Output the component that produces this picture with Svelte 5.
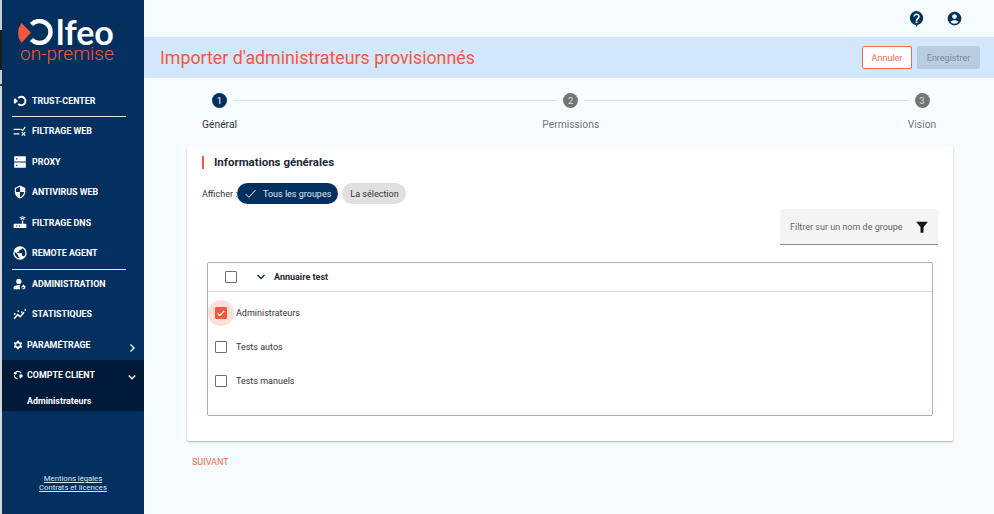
<script>
  const steps = [
    { n: 1, label: 'Général', active: true },
    { n: 2, label: 'Permissions' },
    { n: 3, label: 'Vision' }
  ];
  const groups = [
    { name: 'Administrateurs', checked: true },
    { name: 'Tests autos' },
    { name: 'Tests manuels' }
  ];
  const paths = {
    server: 'M2 2h20v9H2zM2 13h20v9H2zM5 5.500v2h2.500v-2zM5 16.500v2h2.500v-2z',
    shield: 'M12 1 3 5v6c0 5.500 3.800 10.700 9 12 5.200-1.300 9-6.500 9-12V5zm0 11h7c-.5 4.100-3.300 7.800-7 8.900V12H5V6.300l7-3.100z',
    router: 'M3 14h18a1 1 0 0 1 1 1v5a1 1 0 0 1-1 1H3a1 1 0 0 1-1-1v-5a1 1 0 0 1 1-1zm3 3v1.500h2V17zm4 0v1.500h2V17zm5 -8h2v5h-2zM12.500 6.500a6 6 0 0 1 7 0l-1 1.300a4.500 4.500 0 0 0-5 0zM11 4.500a8.500 8.500 0 0 1 10 0l-1 1.200a7 7 0 0 0-8 0z',
    globe: 'M12 2a10 10 0 1 0 0 20 10 10 0 0 0 0-20zm-1 17.900A8 8 0 0 1 4.200 10L9 15v1a2 2 0 0 0 2 2zm6.900-2.500A2 2 0 0 0 16 16h-1v-3a1 1 0 0 0-1-1H8v-2h2a1 1 0 0 0 1-1V7h2a2 2 0 0 0 2-2v-.4a8 8 0 0 1 2.900 12.800z',
    admin: 'M10 3a4.500 4.500 0 1 1 0 9 4.500 4.500 0 0 1 0-9zM1 21v-3c0-2.700 5-4.500 9-4.500 .8 0 1.500 0 2.200.2A7 7 0 0 0 12.500 21zM18 13a1 1 0 0 1 1 1v.6l1 .5.600-.3 1 1.700-.5.400v1.200l.5.400-1 1.700-.600-.3-1 .5v.6h-2v-.6l-1-.5-.600.3-1-1.700.5-.4v-1.200l-.5-.4 1-1.700.600.3 1-.5V14a1 1 0 0 1 1-1zm-1 3.500a1.500 1.500 0 1 0 0 3 1.500 1.500 0 0 0 0-3z',
    gear: 'M19.400 13a7.600 7.600 0 0 0 0-2l2.100-1.600-2-3.500-2.500 1a7.500 7.500 0 0 0-1.700-1L15 3.300h-4l-.4 2.600a7.500 7.500 0 0 0-1.700 1l-2.500-1-2 3.500L6.500 11a7.600 7.600 0 0 0 0 2l-2.100 1.600 2 3.500 2.500-1a7.500 7.500 0 0 0 1.700 1l.4 2.600h4l.4-2.600a7.500 7.500 0 0 0 1.700-1l2.500 1 2-3.500zM13 15.500a3.500 3.500 0 1 1 0-7 3.500 3.500 0 0 1 0 7z'
  };
</script>

<div class="page">
  <div class="sliver"></div>
  <aside class="side">
    <div class="logo">
      <div class="brand">
        <svg class="mark" viewBox="0 0 36 26" width="36" height="26" aria-hidden="true">
          <path d="M4.500 4 14 13.500 4.500 24Q-2.500 14 4.500 4z" fill="#f4583a" />
          <path d="M14.500 5.500A11 11 0 1 1 14.500 20.500" fill="none" stroke="#fff" stroke-width="4.400" />
        </svg>
        <span class="lfeo">lfeo</span>
      </div>
      <div class="onp">on-premise</div>
    </div>

    <nav>
      <a class="item"><svg viewBox="0 0 36 26" class="ic"><path d="M4.500 5 13 13 4.500 21Q-1 13 4.500 5z" fill="#fff"/><path d="M13.500 5.500A10.800 10.800 0 1 1 13.500 20.500" stroke="#fff" stroke-width="5" fill="none"/></svg><span>TRUST-CENTER</span></a>
      <div class="rule"></div>
      <a class="item"><svg viewBox="0 0 24 24" class="ic"><path d="M1 8h12v2.200H1zM1 16h10v2.200H1z" fill="#fff"/><path d="m14 9 2.500 2.500L21 5M15 14l6 6M21 14l-6 6" stroke="#fff" stroke-width="2" fill="none"/></svg><span>FILTRAGE WEB</span></a>
      <a class="item"><svg viewBox="0 0 24 24" class="ic"><path d={paths.server} fill="#fff" fill-rule="evenodd"/></svg><span>PROXY</span></a>
      <a class="item"><svg viewBox="1 0 22 24" class="ic"><path d={paths.shield} fill="#fff"/></svg><span>ANTIVIRUS WEB</span></a>
      <a class="item"><svg viewBox="1 2 22 22" class="ic"><path d={paths.router} fill="#fff" fill-rule="evenodd"/></svg><span>FILTRAGE DNS</span></a>
      <a class="item"><svg viewBox="1.500 1.500 21 21" class="ic"><path d={paths.globe} fill="#fff"/></svg><span>REMOTE AGENT</span></a>
      <div class="rule"></div>
      <a class="item"><svg viewBox="0 1 24 22" class="ic"><path d={paths.admin} fill="#fff" fill-rule="evenodd"/></svg><span>ADMINISTRATION</span></a>
      <a class="item"><svg viewBox="0 2 24 20" class="ic"><path d="m2 20 6-7 4.500 3.500L19 9" stroke="#fff" stroke-width="2.500" fill="none"/><circle cx="3" cy="12" r="1.600" fill="#fff"/><circle cx="9" cy="7" r="1.600" fill="#fff"/><circle cx="15" cy="9" r="1.600" fill="#fff"/><circle cx="21" cy="5" r="1.600" fill="#fff"/></svg><span>STATISTIQUES</span></a>
      <a class="item sub"><svg viewBox="3 2 20 20" class="ic small"><path d={paths.gear} fill="#fff" fill-rule="evenodd"/></svg><span>PARAMÉTRAGE</span>
        <svg viewBox="0 0 24 24" class="chev"><path d="m9 5 7 7-7 7" stroke="#fff" stroke-width="2.800" fill="none"/></svg></a>
      <div class="open">
        <a class="item sub"><svg viewBox="1 2 22 20" class="ic small"><path d="M8 5a8 8 0 0 1 11 3M20 13a8 8 0 0 1-4 6M11 20a8 8 0 0 1-7-8" stroke="#fff" stroke-width="2.500" fill="none"/><circle cx="6" cy="8" r="3" fill="#fff"/><path d="M15 11h7v6h-7z" fill="#fff"/></svg><span>COMPTE CLIENT</span>
          <svg viewBox="0 0 24 24" class="chev"><path d="m5.500 9 6.500 6.500L18.500 9" stroke="#fff" stroke-width="2.800" fill="none"/></svg></a>
        <a class="subitem">Administrateurs</a>
      </div>
    </nav>

    <div class="legal">
      <a>Mentions légales</a>
      <a>Contrats et licences</a>
    </div>
  </aside>

  <main>
    <header class="top">
      <svg viewBox="0 0 24 24" width="17" height="17"><path d="M12 1.500a9.800 9.800 0 0 0-1 19.500l1 2.500 2-2.700A9.800 9.800 0 0 0 12 1.500z" fill="#03305f"/><path d="M8.800 9.300a3.300 3.300 0 1 1 5.200 2.700c-1.300.9-2 1.400-2 3" stroke="#fff" stroke-width="2.200" fill="none"/><rect x="10.800" y="16.200" width="2.400" height="2.400" fill="#fff"/></svg>
      <svg viewBox="0 0 24 24" width="15" height="15"><path d="M12 1a11 11 0 1 0 0 22 11 11 0 0 0 0-22zm0 4a3.800 3.800 0 1 1 0 7.600A3.800 3.800 0 0 1 12 5zm0 15.500c-2.700 0-5-1.200-6.400-3.200 1-1.600 3.900-2.500 6.400-2.500s5.400.9 6.400 2.500c-1.400 2-3.700 3.200-6.400 3.200z" fill="#03305f"/></svg>
    </header>

    <section class="titlebar">
      <h1>Importer d'administrateurs provisionnés</h1>
      <div class="actions">
        <button class="cancel">Annuler</button>
        <button class="save">Enregistrer</button>
      </div>
    </section>

    <div class="content">
      <div class="stepper">
        {#each steps as s, i}
          <div class="step">
            <div class="bullet" class:on={s.active}>{s.n}</div>
            <div class="slabel" class:on={s.active}>{s.label}</div>
          </div>
          {#if i < 2}<div class="line"></div>{/if}
        {/each}
      </div>

      <div class="card">
        <h2>Informations générales</h2>
        <div class="show">
          <span class="afficher">Afficher :</span>
          <span class="chip on"><svg viewBox="0 0 24 24" width="13" height="13"><path d="m3 13 6 6L21 6" stroke="#fff" stroke-width="1.700" fill="none"/></svg>Tous les groupes</span>
          <span class="chip">La sélection</span>
        </div>
        <div class="filter-row">
          <div class="filter">
            <span>Filtrer sur un nom de groupe</span>
            <svg viewBox="0 0 24 24" width="14" height="14"><path d="M2 3h20l-7.500 9.500V22h-5v-9.500z" fill="#111"/></svg>
          </div>
        </div>
        <div class="tree">
          <div class="tree-head">
            <span class="box"></span>
            <svg viewBox="0 0 24 24" width="12" height="12"><path d="m5 8 7 7 7-7" stroke="#03305f" stroke-width="3" fill="none"/></svg>
            <strong>Annuaire test</strong>
          </div>
          <div class="tree-body">
            {#each groups as g}
              <div class="row">
                <span class="halo" class:lit={g.checked}>
                  <span class="box" class:checked={g.checked}>
                    {#if g.checked}<svg viewBox="0 0 24 24" width="10" height="10"><path d="m4 13 5 5L20 7" stroke="#fff" stroke-width="3" fill="none"/></svg>{/if}
                  </span>
                </span>
                <span class="gname">{g.name}</span>
              </div>
            {/each}
          </div>
        </div>
      </div>

      <div class="next">SUIVANT</div>
    </div>
  </main>
</div>

<style>
  :global(body) { margin: 0; background: #f6fbff; font-family: Roboto, "Liberation Sans", sans-serif; }
  .page { display: flex; height: 514px; width: 994px; overflow: hidden; }
  .sliver { width: 2px; flex: none; background: linear-gradient(#c9ced4 0 30px, #1a1a1a 30px 70px, #c9ced4 70px 84px, #333 84px 86px, #d4d8dc 86px); }
  .side { width: 142px; background: #03305f; color: #fff; display: flex; flex-direction: column; flex: none; }
  .logo { height: 85.500px; padding: 19px 0 0 15px; box-sizing: border-box; }
  .brand { display: flex; align-items: center; height: 26px; }
  .mark { flex: none; margin-right: 3px; }
  .lfeo { font-family: Lato, Roboto, sans-serif; font-weight: 700; font-size: 34px; line-height: 26px; color: #fff; }
  .onp { color: #f4583a; font-size: 19px; line-height: 14px; margin: 2px 0 0 3px; font-weight: 300; }
  nav { display: flex; flex-direction: column; }
  .item { display: flex; align-items: center; height: 30.500px; padding-left: 11px; gap: 5px; font-size: 8.900px; font-weight: 700; color: #fff; position: relative; box-sizing: border-box; }
  .ic { width: 14px; height: 14px; flex: none; }
  .ic.small { width: 10px; height: 10px; }
  .item.sub { gap: 4px; }
  .open .item.sub { padding-bottom: 1px; }
  .chev { width: 12px; height: 12px; position: absolute; right: 6.500px; top: 12px; }
  .open .chev { top: 11px; }
  .rule { height: 1px; background: #dfe7ef; margin: 0 18px -1px 10px; position: relative; }
  .open { background: #001a39; }
  .subitem { display: block; height: 20px; font-size: 8.900px; font-weight: 700; padding-left: 25px; color: #fff; line-height: 21px; }
  .legal { margin-top: auto; padding-bottom: 22px; display: flex; flex-direction: column; align-items: center; font-size: 7.700px; line-height: 9px; color: #dce8f4; }
  .legal a { text-decoration: underline; }

  main { flex: 1; min-width: 0; display: flex; flex-direction: column; }
  .top { height: 37px; display: flex; align-items: center; justify-content: flex-end; gap: 22px; padding-right: 32px; box-sizing: border-box; }
  .titlebar { height: 41px; background: #d2e7fc; display: flex; align-items: center; justify-content: space-between; padding: 0 14px 0 16px; }
  h1 { margin: 0; font-size: 17.800px; font-weight: 400; color: #f4583a; }
  .actions { display: flex; gap: 5px; }
  button { height: 23px; border-radius: 2px; font: 400 9px Roboto, sans-serif; padding: 0; }
  .cancel { width: 50px; background: #fff; color: #f4684d; border: 1px solid #f4684d; }
  .save { width: 63px; background: #b9cde0; color: #7a8a99; border: none; }

  .content { padding: 14px 41px 0 43px; }
  .stepper { display: flex; align-items: flex-start; height: 54px; padding: 0 23.500px 0 25px; }
  .line { flex: 1; height: 1px; background: #e0e0e0; margin: 8px 6px 0 6px; }
  .step { position: relative; width: 15px; flex: none; }
  .bullet { width: 15px; height: 15px; margin-top: .5px; border-radius: 50%; background: #757575; color: #dcdcdc; font-size: 9.500px; text-align: center; line-height: 15px; }
  .bullet.on { background: #03305f; color: #fff; }
  .slabel { position: absolute; top: 27px; left: 7.500px; transform: translateX(-50%); font-size: 10.300px; color: #757575; white-space: nowrap; line-height: 12px; }
  .slabel.on { color: #333; }

  .card { background: #fff; border-radius: 2px; box-shadow: 0 1px 2px rgba(0,0,0,.3); height: 295px; padding: 1px 15px 0 15px; box-sizing: border-box; }
  h2 { margin: 9px 0 0; font-size: 11.500px; font-weight: 700; color: #1f2933; border-left: 2px solid #f4583a; height: 13px; line-height: 13px; padding-left: 10px; }
  .show { display: flex; align-items: center; margin-top: 14px; height: 21px; font-size: 9px; color: #333; }
  .afficher { width: 35px; flex: none; white-space: nowrap; padding-top: 1px; }
  .chip { display: inline-flex; align-items: center; height: 21px; border-radius: 11px; background: #e0e0e0; padding: 0 7px 0 8px; color: #333; margin-left: 4px; }
  .chip.on { background: #03305f; color: #dfe9f3; gap: 6px; margin-left: 0; padding: 0 7px; }
  .filter-row { display: flex; justify-content: flex-end; margin-top: 5px; }
  .filter { width: 158px; height: 36px; background: #f4f4f4; border-bottom: 1px solid #8a8a8a; border-radius: 3px 3px 0 0; display: flex; align-items: center; justify-content: space-between; padding: 0 9px 0 10px; box-sizing: border-box; font-size: 9px; color: #666; }
  .tree { margin: 17px 5px 0 5px; border: 1px solid #9fb1cf; border-radius: 2px; height: 154px; box-sizing: border-box; }
  .tree-head { height: 28px; border-bottom: 1px solid #d9d9d9; display: flex; align-items: center; padding-left: 17px; font-size: 9px; color: #1f2933; }
  .tree-head svg { margin-left: 18px; margin-right: 7px; }
  .box { width: 10px; height: 10px; border: 1px solid #6f6f6f; display: inline-flex; align-items: center; justify-content: center; box-sizing: content-box; flex: none; border-radius: 1px; }
  .box.checked { background: #f4583a; border-color: #f4583a; }
  .tree-body { padding-top: 4px; }
  .row { display: flex; align-items: center; height: 34.200px; padding-left: 1.500px; font-size: 9px; color: #333; }
  .halo { width: 22px; height: 22px; border-radius: 50%; display: flex; align-items: center; justify-content: center; margin-right: 4.500px; }
  .halo.lit { background: #fde0d9; box-shadow: 0 0 0 2px #fde0d9; }
  .next { margin: 16px 0 0 5px; font-size: 9px; color: #f4684d; }
</style>
